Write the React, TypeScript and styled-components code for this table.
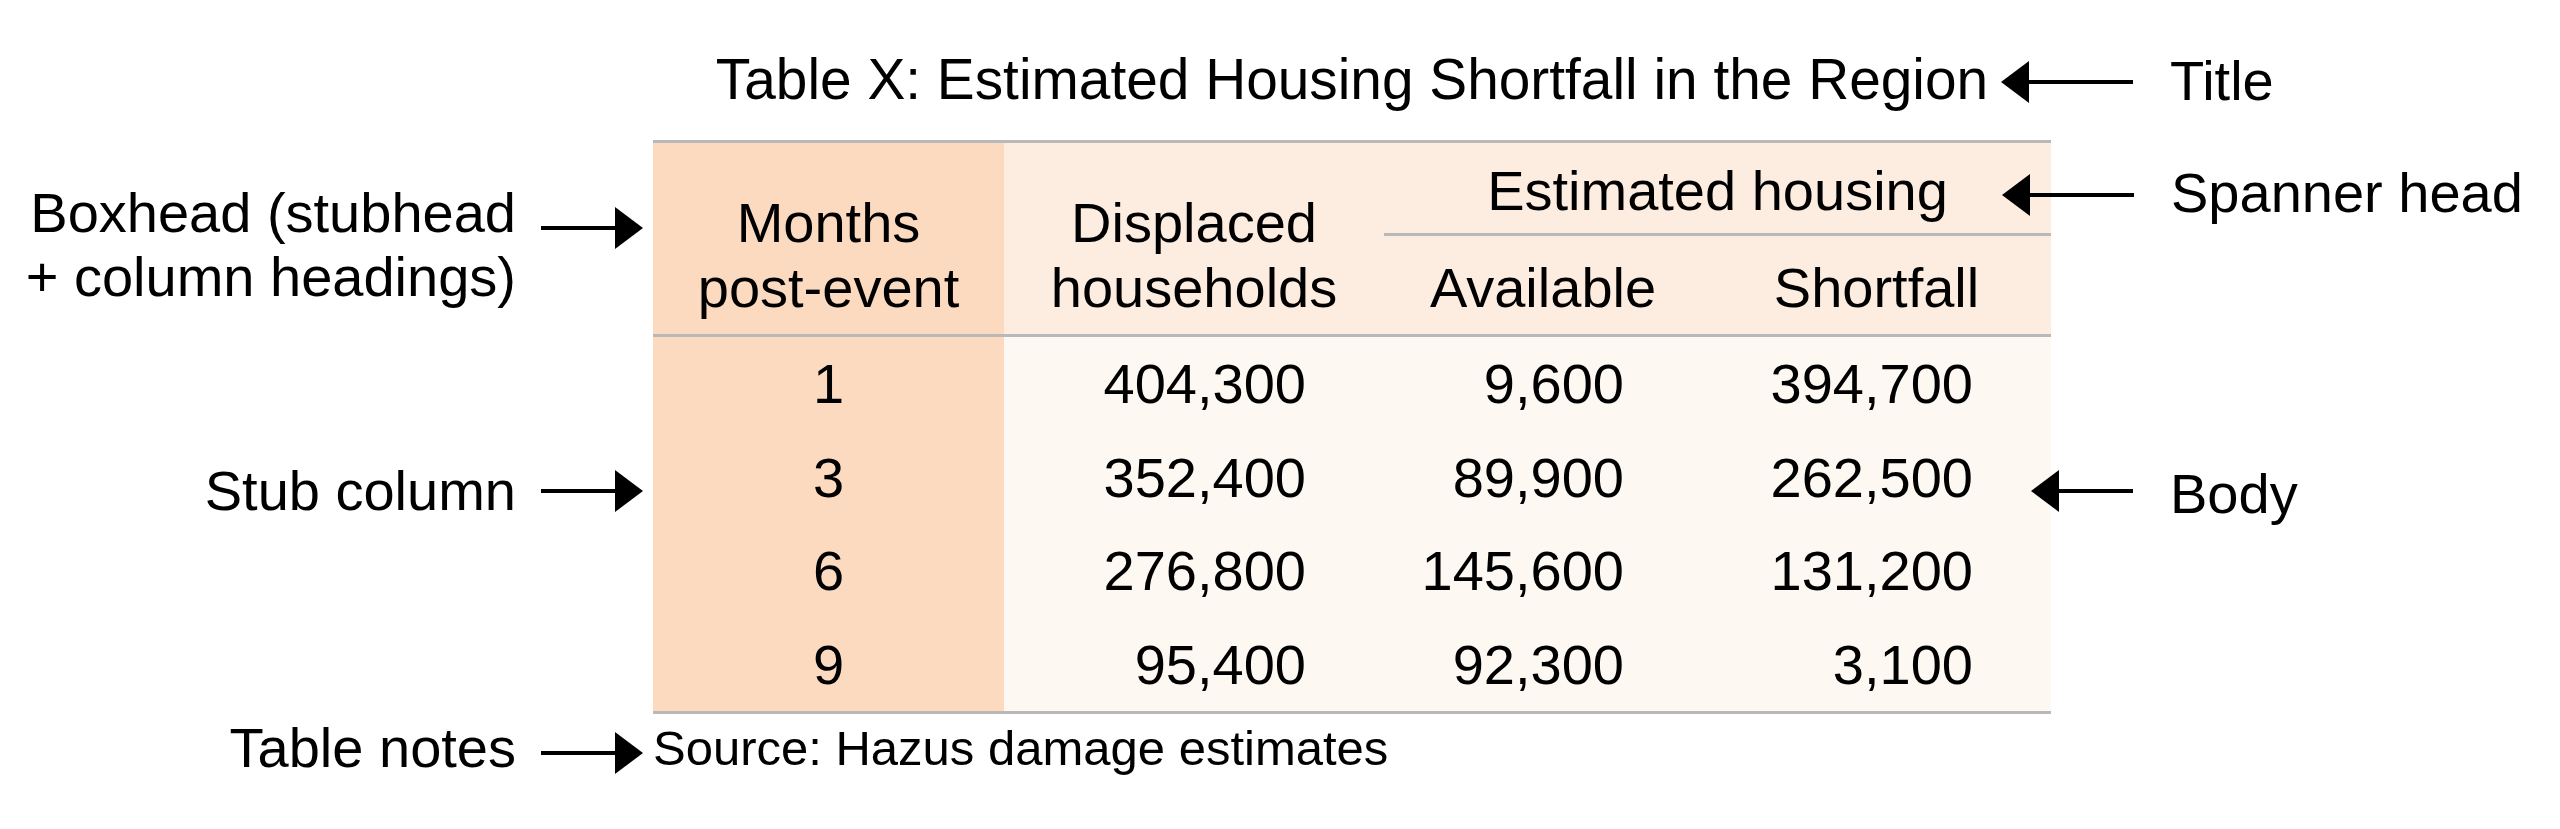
import React from 'react';
import styled, { createGlobalStyle } from 'styled-components';

const palette = {
  ink: '#000',
  rule: '#b9b9b9',
  stub: '#fbdac0',
  head: '#fdede1',
  body: '#fdf8f2',
};

const GlobalStyle = createGlobalStyle`
  html, body {
    margin: 0;
    padding: 0;
    background: #fff;
  }
  body {
    font-family: 'Liberation Sans', Arial, sans-serif;
    color: ${palette.ink};
  }
`;

const Page = styled.div`
  display: grid;
  grid-template-columns: 653px 1398px 1fr;
  grid-template-rows: 140px 197px 377px auto;
  width: 2560px;
  height: 829px;
  font-size: 56px;
  overflow: hidden;
`;

const Title = styled.div`
  grid-column: 2;
  grid-row: 1;
  padding-top: 48px;
  font-size: 56.8px;
  line-height: 64px;
  text-align: center;
  white-space: nowrap;
`;

const TableArea = styled.div`
  grid-column: 2;
  grid-row: 2 / span 2;
`;

const Notes = styled.div`
  grid-column: 2;
  grid-row: 4;
  padding-top: 2px;
  font-size: 49px;
  line-height: 64px;
  white-space: nowrap;
`;

const Table = styled.table`
  width: 1398px;
  table-layout: fixed;
  border-collapse: separate;
  border-spacing: 0;
  font-size: 56px;

  tbody tr:last-child td {
    border-bottom: 3px solid ${palette.rule};
  }
`;

const Col = styled.col<{ $w: number }>`
  width: ${p => p.$w}px;
`;

const BoxCell = styled.th<{ $stub?: boolean }>`
  font-weight: normal;
  line-height: 65px;
  text-align: center;
  vertical-align: bottom;
  padding: 0 0 14.5px;
  background: ${p => (p.$stub ? palette.stub : palette.head)};
  border-top: 3px solid ${palette.rule};
  border-bottom: 3px solid ${palette.rule};
`;

const SpannerCell = styled.th`
  font-weight: normal;
  line-height: 65px;
  text-align: center;
  padding: 14.5px 0 10.5px;
  background: ${palette.head};
  border-top: 3px solid ${palette.rule};
  border-bottom: 3px solid ${palette.rule};
`;

const SubHeadCell = styled.th`
  font-weight: normal;
  line-height: 65px;
  text-align: center;
  padding: 18.5px 0 14.5px;
  background: ${palette.head};
  border-bottom: 3px solid ${palette.rule};
`;

const StubCell = styled.td`
  line-height: 93.5px;
  padding: 0;
  text-align: center;
  background: ${palette.stub};
`;

const NumCell = styled.td`
  line-height: 93.5px;
  padding: 0 78px 0 0;
  text-align: right;
  background: ${palette.body};
`;

const LeftNote = styled.div<{ $row: number; $top: number }>`
  grid-column: 1;
  grid-row: ${p => p.$row};
  display: flex;
  justify-content: flex-end;
  align-items: flex-start;
  align-self: start;
  gap: 25px;
  padding: ${p => p.$top}px 10px 0 0;
`;

const RightNote = styled.div<{ $row: number; $top: number; $pull: number }>`
  grid-column: 3;
  grid-row: ${p => p.$row};
  display: flex;
  align-items: flex-start;
  align-self: start;
  gap: 37px;
  padding-top: ${p => p.$top}px;
  margin-left: ${p => p.$pull}px;
  position: relative;
`;

const Label = styled.div<{ $right?: boolean }>`
  line-height: 64px;
  white-space: nowrap;
  text-align: ${p => (p.$right ? 'right' : 'left')};
`;

const ArrowSvg = styled.svg<{ $drop: number }>`
  display: block;
  flex-shrink: 0;
  margin-top: ${p => p.$drop}px;
`;

type ArrowProps = { dir: 'left' | 'right'; length: number; drop: number };

const Arrow = ({ dir, length, drop }: ArrowProps) => {
  const head = 28;
  return (
    <ArrowSvg $drop={drop} width={length} height={42} viewBox={`0 0 ${length} 42`}>
      {dir === 'right' ? (
        <>
          <line x1={0} y1={21} x2={length - head + 2} y2={21} stroke={palette.ink} strokeWidth={4} />
          <polygon points={`${length - head},0 ${length},21 ${length - head},42`} fill={palette.ink} />
        </>
      ) : (
        <>
          <line x1={head - 2} y1={21} x2={length} y2={21} stroke={palette.ink} strokeWidth={4} />
          <polygon points={`${head},0 0,21 ${head},42`} fill={palette.ink} />
        </>
      )}
    </ArrowSvg>
  );
};

const rows = [
  { month: '1', displaced: '404,300', available: '9,600', shortfall: '394,700' },
  { month: '3', displaced: '352,400', available: '89,900', shortfall: '262,500' },
  { month: '6', displaced: '276,800', available: '145,600', shortfall: '131,200' },
  { month: '9', displaced: '95,400', available: '92,300', shortfall: '3,100' },
];

const App = () => {
  return (
    <>
      <GlobalStyle />
      <Page>
        <Title>Table X: Estimated Housing Shortfall in the Region</Title>

        <TableArea>
          <Table>
            <colgroup>
              <Col $w={351} />
              <Col $w={380} />
              <Col $w={318} />
              <Col $w={349} />
            </colgroup>
            <thead>
              <tr>
                <BoxCell $stub rowSpan={2}>Months<br />post-event</BoxCell>
                <BoxCell rowSpan={2}>Displaced<br />households</BoxCell>
                <SpannerCell colSpan={2}>Estimated housing</SpannerCell>
              </tr>
              <tr>
                <SubHeadCell>Available</SubHeadCell>
                <SubHeadCell>Shortfall</SubHeadCell>
              </tr>
            </thead>
            <tbody>
              {rows.map(r => (
                <tr key={r.month}>
                  <StubCell>{r.month}</StubCell>
                  <NumCell>{r.displaced}</NumCell>
                  <NumCell>{r.available}</NumCell>
                  <NumCell>{r.shortfall}</NumCell>
                </tr>
              ))}
            </tbody>
          </Table>
        </TableArea>

        <Notes>Source: Hazus damage estimates</Notes>

        <LeftNote $row={2} $top={41}>
          <Label $right>Boxhead (stubhead<br />+ column headings)</Label>
          <Arrow dir="right" length={102} drop={26} />
        </LeftNote>
        <LeftNote $row={3} $top={122}>
          <Label $right>Stub column</Label>
          <Arrow dir="right" length={102} drop={11} />
        </LeftNote>
        <LeftNote $row={4} $top={2}>
          <Label $right>Table notes</Label>
          <Arrow dir="right" length={102} drop={16} />
        </LeftNote>

        <RightNote $row={1} $top={49} $pull={-50}>
          <Arrow dir="left" length={132} drop={12} />
          <Label>Title</Label>
        </RightNote>
        <RightNote $row={2} $top={21} $pull={-49}>
          <Arrow dir="left" length={132} drop={13} />
          <Label>Spanner head</Label>
        </RightNote>
        <RightNote $row={3} $top={125} $pull={-20}>
          <Arrow dir="left" length={102} drop={8} />
          <Label>Body</Label>
        </RightNote>
      </Page>
    </>
  );
};

export default App;
